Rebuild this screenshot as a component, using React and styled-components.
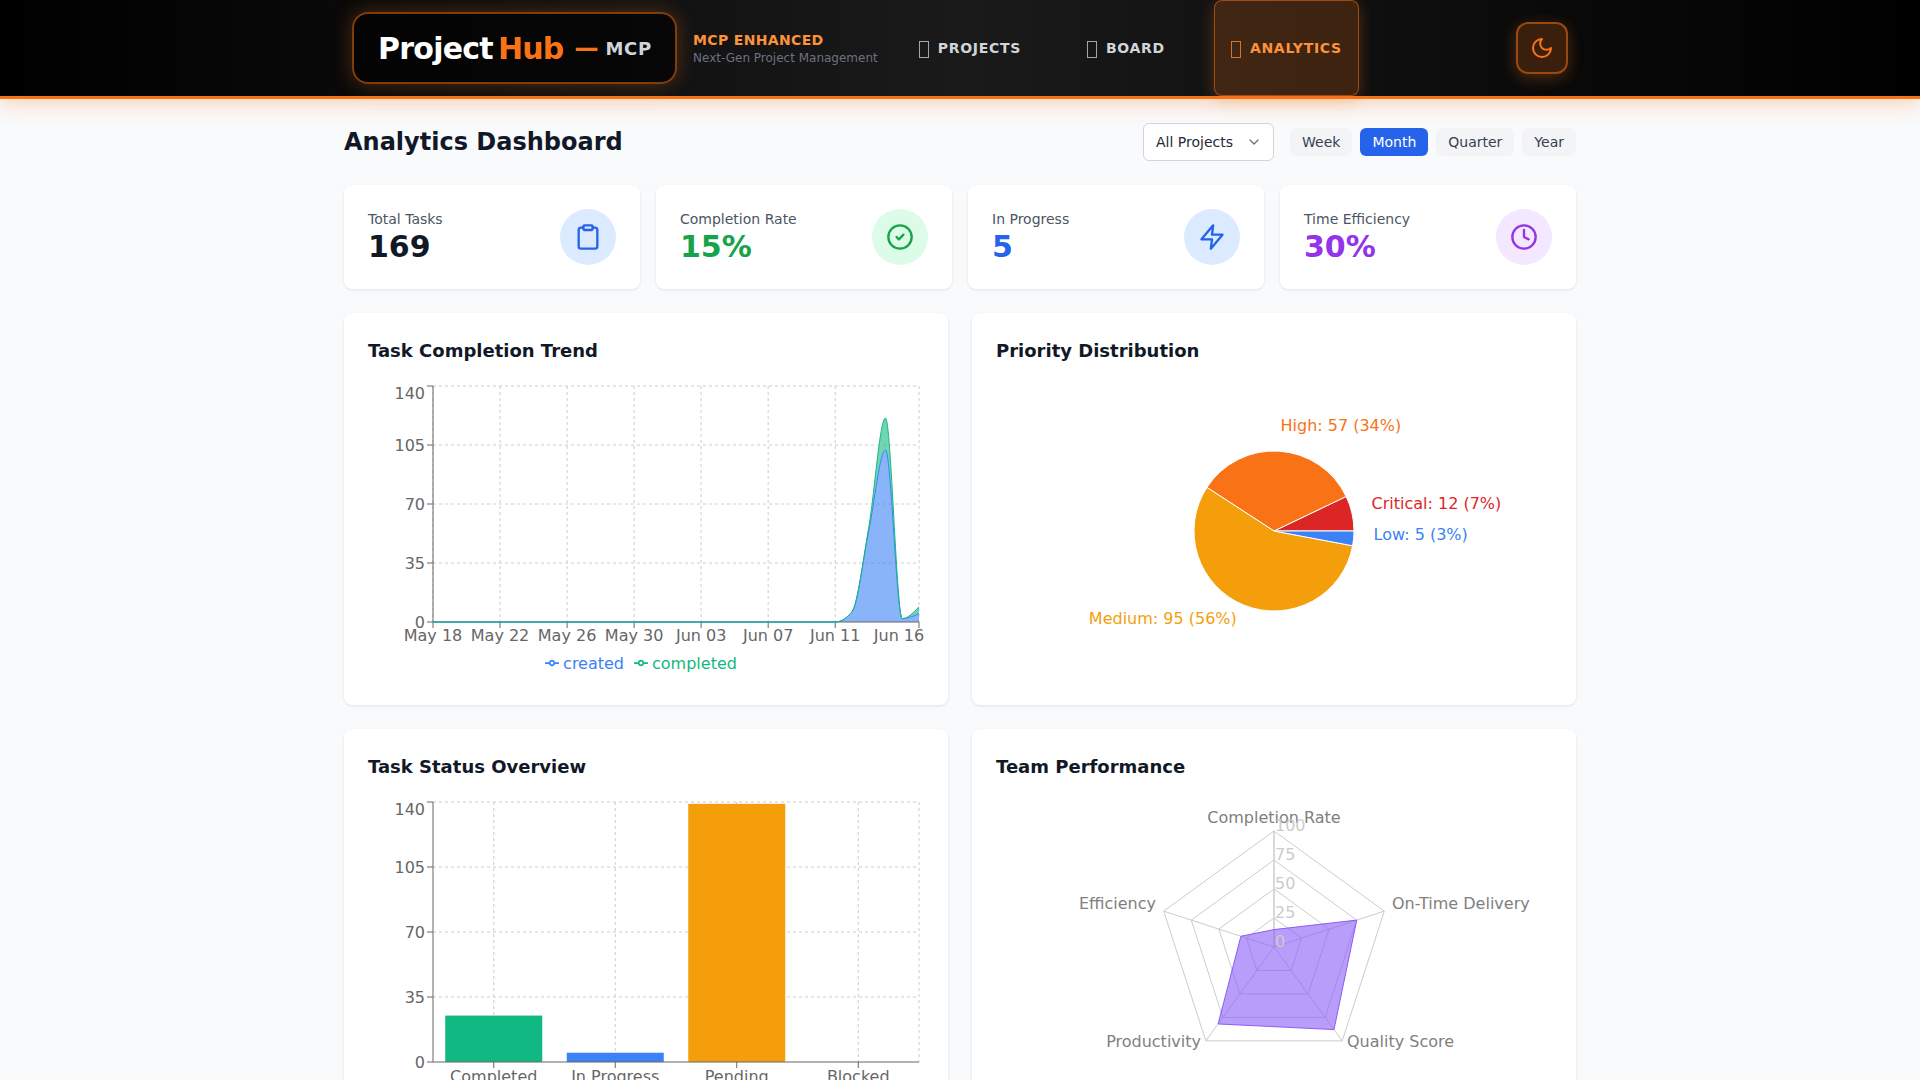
import React from 'react';
import styled, { createGlobalStyle } from 'styled-components';
import { Clipboard, CircleCheck, Clock, ChevronDown } from 'lucide-react';

const Global = createGlobalStyle`
  html, body { margin: 0; padding: 0; background: #f9fafb; }
  body { font-family: "DejaVu Sans", sans-serif; color: #111827; }
  * { box-sizing: border-box; }
`;

const Header = styled.header`
  height: 99px;
  background: linear-gradient(90deg, #000 0%, #1a1a1a 50%, #000 100%);
  border-bottom: 3px solid #f97316;
  box-shadow: 0 4px 20px rgba(249, 115, 22, 0.3);
  position: relative;
`;
const HeaderInner = styled.div`
  max-width: 1280px;
  height: 96px;
  margin: 0 auto;
  padding: 0 32px;
  display: flex;
  align-items: center;
`;
const Logo = styled.div`
  width: 325px;
  height: 72px;
  display: flex;
  align-items: center;
  padding-left: 24px;
  background: rgba(0, 0, 0, 0.6);
  border: 2px solid rgba(249, 115, 22, 0.5);
  border-radius: 16px;
  box-shadow: 0 0 20px rgba(249, 115, 22, 0.3);
  font-size: 30px;
  font-weight: 700;
  letter-spacing: -0.75px;
  color: #fff;
`;
const LogoHub = styled.span`
  color: #f97316;
  margin-left: 5px;
`;
const LogoDash = styled.span`
  color: #f97316;
  font-size: 24px;
  margin-left: 11px;
  letter-spacing: 0;
`;
const LogoMcp = styled.span`
  color: #d1d5db;
  font-size: 18px;
  letter-spacing: 0.6px;
  margin-left: 7px;
`;
const Tagline = styled.div`
  margin-left: 16px;
  display: flex;
  flex-direction: column;
  gap: 1px;
`;
const TagTop = styled.span`
  font-size: 14px;
  line-height: 18px;
  font-weight: 700;
  letter-spacing: 0.35px;
  color: #fb923c;
`;
const TagBottom = styled.span`
  font-size: 12px;
  line-height: 16px;
  color: #6b7280;
`;
const Nav = styled.nav`
  margin-left: 24px;
  height: 96px;
  display: flex;
  gap: 32px;
`;
const NavItem = styled.a`
  display: flex;
  align-items: center;
  gap: 8px;
  padding: 0 16px;
  font-size: 14px;
  font-weight: 700;
  letter-spacing: 0.7px;
  text-transform: uppercase;
  border-radius: 8px;
  border: 1px solid ${p => (p.$active ? 'rgba(249,115,22,.5)' : 'transparent')};
  background: ${p => (p.$active ? 'rgba(249,115,22,.2)' : 'transparent')};
  box-shadow: ${p => (p.$active ? '0 4px 15px rgba(249,115,22,.3)' : 'none')};
  color: ${p => (p.$active ? '#fb923c' : '#d1d5db')};
`;
const MissingGlyph = styled.span`
  display: block;
  width: 10px;
  height: 17px;
  margin: 2px 1px 0 0;
  border: 1px solid currentColor;
  opacity: 0.75;
`;
const ThemeButton = styled.button`
  margin-left: auto;
  width: 52px;
  height: 52px;
  display: flex;
  align-items: center;
  justify-content: center;
  background: rgba(249, 115, 22, 0.2);
  border: 2px solid rgba(249, 115, 22, 0.5);
  border-radius: 12px;
  box-shadow: 0 4px 15px rgba(249, 115, 22, 0.3);
  color: #f97316;
  padding: 0;
`;
const Main = styled.main`
  max-width: 1280px;
  margin: 0 auto;
  padding: 24px 24px 48px;
`;
const TitleRow = styled.div`
  display: flex;
  justify-content: space-between;
  align-items: center;
  height: 38px;
  margin-bottom: 24px;
`;
const PageTitle = styled.h1`
  margin: 0;
  font-size: 24px;
  font-weight: 700;
  color: #111827;
`;
const Controls = styled.div`
  display: flex;
  align-items: center;
  gap: 8px;
`;
const Select = styled.div`
  width: 131px;
  height: 38px;
  margin-right: 8px;
  padding: 0 11px 0 12px;
  display: flex;
  align-items: center;
  justify-content: space-between;
  background: #fff;
  border: 1px solid #d1d5db;
  border-radius: 6px;
  font-size: 14px;
  color: #1f2937;
`;
const RangeButton = styled.button`
  height: 28px;
  padding: 0 12px;
  border: 0;
  border-radius: 6px;
  font-family: inherit;
  font-size: 14px;
  background: ${p => (p.$active ? '#2563eb' : '#f3f4f6')};
  color: ${p => (p.$active ? '#fff' : '#374151')};
`;
const StatGrid = styled.section`
  display: grid;
  grid-template-columns: repeat(4, 1fr);
  gap: 16px;
  margin-bottom: 24px;
`;
const StatCard = styled.div`
  height: 104px;
  padding: 24px;
  background: #fff;
  border-radius: 8px;
  box-shadow: 0 1px 3px rgba(0, 0, 0, 0.1);
  display: flex;
  justify-content: space-between;
`;
const StatLabel = styled.div`
  font-size: 14px;
  line-height: 20px;
  color: #4b5563;
`;
const StatValue = styled.div`
  font-size: 30px;
  line-height: 36px;
  font-weight: 700;
  color: ${p => p.$color};
`;
const StatIcon = styled.div`
  width: 56px;
  height: 56px;
  border-radius: 50%;
  display: flex;
  align-items: center;
  justify-content: center;
  background: ${p => p.$bg};
  color: ${p => p.$color};
`;
const ChartGrid = styled.section`
  display: grid;
  grid-template-columns: repeat(2, 1fr);
  gap: 24px;
`;
const ChartCard = styled.div`
  height: 392px;
  padding: 24px;
  background: #fff;
  border-radius: 8px;
  box-shadow: 0 1px 3px rgba(0, 0, 0, 0.1);
`;
const ChartTitle = styled.h2`
  margin: 0 0 16px;
  font-size: 18px;
  line-height: 28px;
  font-weight: 600;
  color: #111827;
`;
const ChartSvg = styled.svg`
  display: block;
`;
const SvgLabel = styled.text`
  font-family: "DejaVu Sans", sans-serif;
  font-size: 16px;
  fill: ${p => p.$color || '#666'};
`;
const Legend = styled.div`
  height: 24px;
  display: flex;
  justify-content: center;
  align-items: center;
  font-size: 16px;
`;
const LegendItem = styled.span`
  display: inline-flex;
  align-items: center;
  gap: 4px;
  margin-right: 10px;
  color: ${p => p.$color};
`;

const ox = 65, oy = 5, W = 486, H = 236, MAXV = 140;

function monotone(pts) {
  const n = pts.length;
  const m = new Array(n).fill(0);
  const s = [];
  for (let i = 0; i < n - 1; i++) s.push((pts[i + 1][1] - pts[i][1]) / (pts[i + 1][0] - pts[i][0]));
  for (let i = 1; i < n - 1; i++) {
    const h0 = pts[i][0] - pts[i - 1][0], h1 = pts[i + 1][0] - pts[i][0];
    const p = (s[i - 1] * h1 + s[i] * h0) / (h0 + h1);
    m[i] = (Math.sign(s[i - 1]) + Math.sign(s[i])) * Math.min(Math.abs(s[i - 1]), Math.abs(s[i]), 0.5 * Math.abs(p)) || 0;
  }
  m[0] = (3 * s[0] - m[1]) / 2;
  m[n - 1] = (3 * s[n - 2] - m[n - 2]) / 2;
  let d = `M${pts[0][0]},${pts[0][1]}`;
  for (let i = 0; i < n - 1; i++) {
    const h = (pts[i + 1][0] - pts[i][0]) / 3;
    d += `C${pts[i][0] + h},${pts[i][1] + m[i] * h},${pts[i + 1][0] - h},${pts[i + 1][1] - m[i + 1] * h},${pts[i + 1][0]},${pts[i + 1][1]}`;
  }
  return d;
}

const tail = n => new Array(n).fill(0);
const created = [...tail(25), 6, 54, 102, 2, 5];
const completed = [...tail(25), 0, 2, 19, 0, 4];
const xTicks = [['May 18', 0], ['May 22', 4], ['May 26', 8], ['May 30', 12], ['Jun 03', 16], ['Jun 07', 20], ['Jun 11', 24], ['Jun 16', 29]];

function AxisY({ ys }) {
  return ys.map(([v, y, ly]) => (
    <g key={v}>
      <line x1={ox - 6} x2={ox} y1={y} y2={y} stroke="#666" />
      <SvgLabel x={ox - 8} y={ly + 6} textAnchor="end">{v}</SvgLabel>
    </g>
  ));
}

function TrendChart() {
  const sx = i => ox + (i * W) / 29;
  const sy = v => oy + H - (v * H) / MAXV;
  const a = created.map((v, i) => [sx(i), sy(v)]);
  const b = completed.map((v, i) => [sx(i), sy(v + created[i])]);
  const da = monotone(a);
  const db = monotone(b);
  const rev = monotone([...a].reverse());
  const ys = [[140, oy, oy + 7], [105, oy + 59, oy + 59], [70, oy + 118, oy + 118], [35, oy + 177, oy + 177], [0, oy + 236, oy + 236]];
  return (
    <ChartSvg width="556" height="270" viewBox="0 0 556 270">
      <g stroke="#ccc" strokeDasharray="3 3" fill="none">
        {ys.slice(0, 4).map(([v, y]) => <line key={v} x1={ox} x2={ox + W} y1={y} y2={y} />)}
        {xTicks.map(([t, i]) => <line key={t} x1={sx(i)} x2={sx(i)} y1={oy} y2={oy + H} />)}
      </g>
      <path d={`${da}L${sx(29)},${oy + H}L${ox},${oy + H}Z`} fill="#3b82f6" fillOpacity="0.6" />
      <path d={`${db}L${rev.slice(1)}Z`} fill="#10b981" fillOpacity="0.6" />
      <line x1={ox} x2={ox} y1={oy} y2={oy + H} stroke="#666" />
      <line x1={ox} x2={ox + W} y1={oy + H} y2={oy + H} stroke="#666" />
      <AxisY ys={ys} />
      {xTicks.map(([t, i]) => (
        <g key={t}>
          <line x1={sx(i)} x2={sx(i)} y1={oy + H} y2={oy + H + 6} stroke="#666" />
          <SvgLabel x={i === 29 ? 531 : sx(i)} y={oy + H + 19} textAnchor="middle">{t}</SvgLabel>
        </g>
      ))}
      <path d={da} fill="none" stroke="#3b82f6" />
      <path d={db} fill="none" stroke="#10b981" />
    </ChartSvg>
  );
}

function LegendMark({ color }) {
  return (
    <svg width="14" height="14" viewBox="0 0 32 32">
      <path d="M0,16h10.67A5.33,5.33,0,1,1,21.33,16H32M21.33,16A5.33,5.33,0,1,1,10.67,16" fill="#fff" stroke={color} strokeWidth="4" />
    </svg>
  );
}

const pieData = [
  ['Critical', 12, '#dc2626'],
  ['High', 57, '#f97316'],
  ['Medium', 95, '#f59e0b'],
  ['Low', 5, '#3b82f6'],
];

function PieChart() {
  const cx = 278, cy = 150, r = 80, total = 169;
  const pt = (rad, deg) => [cx + rad * Math.cos((deg * Math.PI) / 180), cy - rad * Math.sin((deg * Math.PI) / 180)];
  let start = 0;
  const slices = pieData.map(([name, v, color]) => {
    const sweep = (v / total) * 360;
    const a0 = start, a1 = start + sweep;
    start = a1;
    const [x0, y0] = pt(r, a0), [x1, y1] = pt(r, a1);
    const mid = (a0 + a1) / 2;
    const [lx, ly] = pt(r + 20, mid);
    return {
      name, v, color, lx, ly,
      anchor: lx > cx ? 'start' : 'end',
      d: `M${cx},${cy}L${x0},${y0}A${r},${r},0,${sweep > 180 ? 1 : 0},0,${x1},${y1}Z`,
      pct: Math.round((v / total) * 100),
    };
  });
  return (
    <ChartSvg width="556" height="300" viewBox="0 0 556 300">
      {slices.map(s => <path key={s.name} d={s.d} fill={s.color} stroke="#fff" />)}
      {slices.map(s => (
        <SvgLabel key={s.name} x={s.lx} y={s.ly} textAnchor={s.anchor} $color={s.color}>
          {`${s.name}: ${s.v} (${s.pct}%)`}
        </SvgLabel>
      ))}
    </ChartSvg>
  );
}

const bars = [['Completed', 25, '#10b981'], ['In Progress', 5, '#3b82f6'], ['Pending', 139, '#f59e0b'], ['Blocked', 0, '#ef4444']];

function BarChart() {
  const h = 260, band = W / 4, bw = 97;
  const ys = [[140, oy, oy + 7], [105, oy + 65, oy + 65], [70, oy + 130, oy + 130], [35, oy + 195, oy + 195], [0, oy + 260, oy + 260]];
  return (
    <ChartSvg width="556" height="300" viewBox="0 0 556 300">
      <g stroke="#ccc" strokeDasharray="3 3" fill="none">
        {ys.slice(0, 4).map(([v, y]) => <line key={v} x1={ox} x2={ox + W} y1={y} y2={y} />)}
        {bars.map((b, i) => <line key={b[0]} x1={ox + band * (i + 0.5)} x2={ox + band * (i + 0.5)} y1={oy} y2={oy + h} />)}
        <line x1={ox + W} x2={ox + W} y1={oy} y2={oy + h} />
      </g>
      {bars.map(([n, v, c], i) => {
        const bh = (v * h) / MAXV;
        return <rect key={n} x={ox + band * (i + 0.5) - bw / 2} y={oy + h - bh} width={bw} height={bh} fill={c} />;
      })}
      <line x1={ox} x2={ox} y1={oy} y2={oy + h} stroke="#666" />
      <line x1={ox} x2={ox + W} y1={oy + h} y2={oy + h} stroke="#666" />
      <AxisY ys={ys} />
      {bars.map(([n], i) => (
        <g key={n}>
          <line x1={ox + band * (i + 0.5)} x2={ox + band * (i + 0.5)} y1={oy + h} y2={oy + h + 6} stroke="#666" />
          <SvgLabel x={ox + band * (i + 0.5)} y={oy + h + 20} textAnchor="middle">{n}</SvgLabel>
        </g>
      ))}
    </ChartSvg>
  );
}

const radar = [
  ['Completion Rate', 15, 278, 26, 'middle'],
  ['On-Time Delivery', 75, 396, 112, 'start'],
  ['Quality Score', 88, 351, 250, 'start'],
  ['Productivity', 82, 205, 250, 'end'],
  ['Efficiency', 30, 160, 112, 'end'],
];

function RadarChart() {
  const cx = 278, cy = 150, R = 116;
  const pt = (i, pct) => {
    const a = (-90 + i * 72) * (Math.PI / 180);
    return [cx + (R * pct * Math.cos(a)) / 100, cy + (R * pct * Math.sin(a)) / 100];
  };
  const poly = vals => vals.map((v, i) => pt(i, v).join(',')).join(' ');
  return (
    <ChartSvg width="556" height="300" viewBox="0 0 556 300">
      <g fill="none" stroke="#ccc">
        {[25, 50, 75, 100].map(v => <polygon key={v} points={poly([v, v, v, v, v])} />)}
        {radar.map((r, i) => {
          const [x, y] = pt(i, 100);
          return <line key={r[0]} x1={cx} y1={cy} x2={x} y2={y} />;
        })}
        <line x1={cx} y1={cy} x2={cx} y2={cy - R} />
      </g>
      {radar.map(([n, , x, y, anchor]) => (
        <SvgLabel key={n} x={x} y={y} textAnchor={anchor} $color="#808080">{n}</SvgLabel>
      ))}
      <polygon points={poly(radar.map(r => r[1]))} fill="#8b5cf6" fillOpacity="0.6" stroke="#8b5cf6" />
      {[0, 25, 50, 75, 100].map(v => (
        <SvgLabel key={v} x={cx + 1} y={cy - (R * v) / 100} $color="#ccc">{v}</SvgLabel>
      ))}
    </ChartSvg>
  );
}

function ZapIcon() {
  return (
    <svg width="28" height="28" viewBox="0 0 24 24" fill="none" stroke="currentColor" strokeWidth="2" strokeLinecap="round" strokeLinejoin="round">
      <polygon points="13 2 3 14 12 14 11 22 21 10 12 10 13 2" />
    </svg>
  );
}

function MoonIcon() {
  return (
    <svg width="24" height="24" viewBox="0 0 24 24" fill="none" stroke="currentColor" strokeWidth="2" strokeLinecap="round" strokeLinejoin="round">
      <path d="M12 3a6 6 0 0 0 9 9 9 9 0 1 1-9-9Z" />
    </svg>
  );
}

const stats = [
  ['Total Tasks', '169', '#111827', '#dbeafe', '#2563eb', <Clipboard size={28} />],
  ['Completion Rate', '15%', '#16a34a', '#dcfce7', '#16a34a', <CircleCheck size={28} />],
  ['In Progress', '5', '#2563eb', '#dbeafe', '#2563eb', <ZapIcon />],
  ['Time Efficiency', '30%', '#9333ea', '#f3e8ff', '#9333ea', <Clock size={28} />],
];

export default function App() {
  return (
    <>
      <Global />
      <Header>
        <HeaderInner>
          <Logo>
            Project<LogoHub>Hub</LogoHub><LogoDash>—</LogoDash><LogoMcp>MCP</LogoMcp>
          </Logo>
          <Tagline>
            <TagTop>MCP ENHANCED</TagTop>
            <TagBottom>Next-Gen Project Management</TagBottom>
          </Tagline>
          <Nav>
            <NavItem><MissingGlyph />Projects</NavItem>
            <NavItem><MissingGlyph />Board</NavItem>
            <NavItem $active><MissingGlyph />Analytics</NavItem>
          </Nav>
          <ThemeButton><MoonIcon /></ThemeButton>
        </HeaderInner>
      </Header>
      <Main>
        <TitleRow>
          <PageTitle>Analytics Dashboard</PageTitle>
          <Controls>
            <Select>All Projects<ChevronDown size={16} color="#6b7280" /></Select>
            <RangeButton>Week</RangeButton>
            <RangeButton $active>Month</RangeButton>
            <RangeButton>Quarter</RangeButton>
            <RangeButton>Year</RangeButton>
          </Controls>
        </TitleRow>
        <StatGrid>
          {stats.map(([label, value, vc, bg, ic, icon]) => (
            <StatCard key={label}>
              <div>
                <StatLabel>{label}</StatLabel>
                <StatValue $color={vc}>{value}</StatValue>
              </div>
              <StatIcon $bg={bg} $color={ic}>{icon}</StatIcon>
            </StatCard>
          ))}
        </StatGrid>
        <ChartGrid>
          <ChartCard>
            <ChartTitle>Task Completion Trend</ChartTitle>
            <TrendChart />
            <Legend>
              <LegendItem $color="#3b82f6"><LegendMark color="#3b82f6" />created</LegendItem>
              <LegendItem $color="#10b981"><LegendMark color="#10b981" />completed</LegendItem>
            </Legend>
          </ChartCard>
          <ChartCard>
            <ChartTitle>Priority Distribution</ChartTitle>
            <PieChart />
          </ChartCard>
          <ChartCard>
            <ChartTitle>Task Status Overview</ChartTitle>
            <BarChart />
          </ChartCard>
          <ChartCard>
            <ChartTitle>Team Performance</ChartTitle>
            <RadarChart />
          </ChartCard>
        </ChartGrid>
      </Main>
    </>
  );
}
